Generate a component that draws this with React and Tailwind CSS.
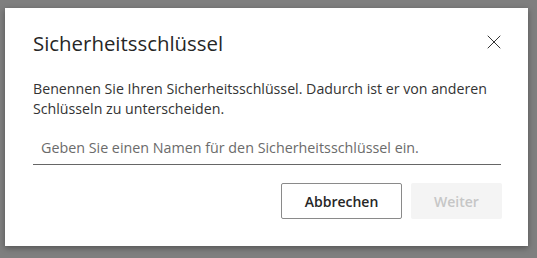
import { X } from 'lucide-react';

export default function App() {
  return (
    <div className="w-[537px] h-[258px] bg-[#7f7f7f] pt-[8px] pl-[5px] overflow-hidden" style={{ fontFamily: '"Open Sans", "Noto Sans", sans-serif' }}>
      <div className="w-[523px] h-[238px] bg-white shadow-[0_2px_6px_rgba(0,0,0,0.35)] flex flex-col px-[28px] pt-[21px]">
        {/* Header */}
        <div className="flex items-start justify-between">
          <h1 className="text-[20.4px] leading-[28px] text-[#262626]">Sicherheitsschlüssel</h1>
          <button className="mt-[1px] mr-[-6px] text-[#333]">
            <X className="w-[24px] h-[24px]" strokeWidth={1} />
          </button>
        </div>

        {/* Description */}
        <p className="mt-[22px] text-[14.2px] leading-[20px] text-[#333]">
          Benennen Sie Ihren Sicherheitsschlüssel. Dadurch ist er von anderen Schlüsseln zu unterscheiden.
        </p>

        {/* Name input */}
        <div className="mt-[16px] border-b border-[#666] pl-[8px] pb-[5px] mr-[-1px]">
          <input
            className="w-full outline-none text-[14.3px] leading-[20px] text-[#333] placeholder:text-[#6b6b6b]"
            placeholder="Geben Sie einen Namen für den Sicherheitsschlüssel ein."
          />
        </div>

        {/* Actions */}
        <div className="mt-[18px] flex justify-end gap-[9px] mr-[-2px]">
          <button className="w-[121px] h-[36px] border border-[#8a8a8a] rounded-[2px] text-[14px] font-semibold text-[#262626]">
            Abbrechen
          </button>
          <button className="w-[91px] h-[36px] bg-[#f4f4f4] rounded-[2px] text-[14px] font-semibold text-[#c6c6c6]">
            Weiter
          </button>
        </div>
      </div>
    </div>
  );
}
